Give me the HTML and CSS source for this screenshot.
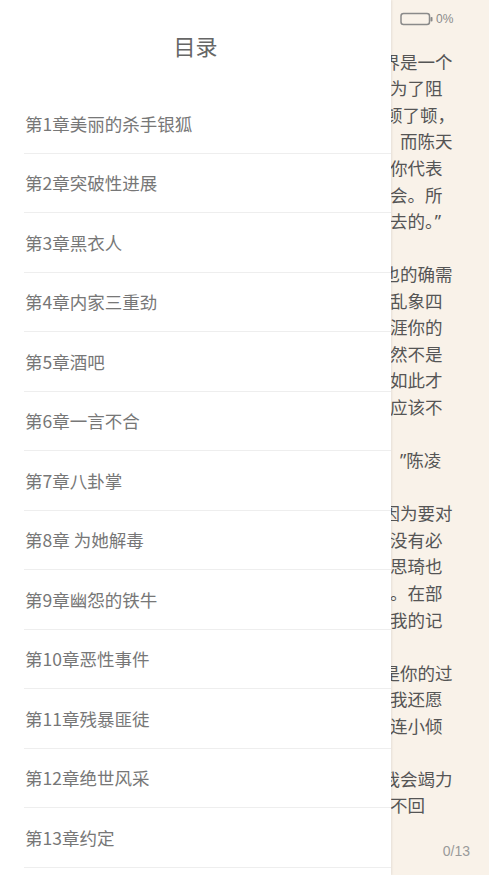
FILE: index.html
```html
<!DOCTYPE html>
<html lang="zh-CN">
<head>
<meta charset="utf-8">
<title>目录</title>
<link rel="stylesheet" href="styles.css">
</head>
<body>
<div class="screen">
  <main class="reader">
    <div class="status">
      <svg class="battery" width="34" height="14" viewBox="0 0 34 14">
        <rect x="1" y="1.5" width="28.5" height="11" rx="2.5" ry="2.5" fill="none" stroke="#8a8a8a" stroke-width="1.5"/>
        <rect x="30.5" y="5" width="2" height="4.5" rx="0.8" fill="#8a8a8a"/>
      </svg>
      <span class="pct">0%</span>
    </div>
    <div class="col">
      <div class="ln sa">界是一个</div>
      <div class="ln">为了阻</div>
      <div class="ln sb">顿了顿，</div>
      <div class="ln sa">，而陈天</div>
      <div class="ln">你代表</div>
      <div class="ln">会。所</div>
      <div class="ln">去的。<span class="q">”</span></div>
      <div class="ln"></div>
      <div class="ln sa">也的确需</div>
      <div class="ln">乱象四</div>
      <div class="ln">涯你的</div>
      <div class="ln">然不是</div>
      <div class="ln">如此才</div>
      <div class="ln">应该不</div>
      <div class="ln"></div>
      <div class="ln sc"><span class="q">”</span>陈凌</div>
      <div class="ln"></div>
      <div class="ln sa">因为要对</div>
      <div class="ln">没有必</div>
      <div class="ln">思琦也</div>
      <div class="ln">。在部</div>
      <div class="ln">我的记</div>
      <div class="ln"></div>
      <div class="ln sa">是你的过</div>
      <div class="ln">我还愿</div>
      <div class="ln">连小倾</div>
      <div class="ln"></div>
      <div class="ln sa">我会竭力</div>
      <div class="ln">不回</div>
    </div>
    <div class="pager">0/13</div>
  </main>

  <aside class="drawer">
    <h1 class="title">目录</h1>
    <ul class="toc">
      <li class="item">第1章美丽的杀手银狐</li>
      <li class="item">第2章突破性进展</li>
      <li class="item">第3章黑衣人</li>
      <li class="item">第4章内家三重劲</li>
      <li class="item">第5章酒吧</li>
      <li class="item">第6章一言不合</li>
      <li class="item">第7章八卦掌</li>
      <li class="item">第8章 为她解毒</li>
      <li class="item">第9章幽怨的铁牛</li>
      <li class="item">第10章恶性事件</li>
      <li class="item">第11章残暴匪徒</li>
      <li class="item">第12章绝世风采</li>
      <li class="item">第13章约定</li>
    </ul>
  </aside>
</div>
</body>
</html>
```

FILE: styles.css
```css
html, body {
  margin: 0;
  padding: 0;
}
body {
  width: 489px;
  height: 875px;
  overflow: hidden;
  background: #f9f2e9;
  font-family: "Noto Sans CJK SC", "Noto Sans", sans-serif;
}
.screen {
  position: relative;
  width: 489px;
  height: 875px;
  overflow: hidden;
}

/* reading page underneath */
.reader {
  display: flex;
  flex-direction: column;
  height: 875px;
  background: #f9f2e9;
}
.status {
  height: 36px;
  display: flex;
  align-items: center;
  padding-left: 400px;
  gap: 2px;
  color: #8a8a8a;
  box-sizing: border-box;
  padding-top: 1px;
}
.battery {
  display: block;
}
.pct {
  font-family: "Liberation Sans", "Noto Sans", sans-serif;
  font-size: 12px;
  line-height: 14px;
}
.col {
  margin-top: 12.7px;
  margin-left: 390px;
  color: #555;
  font-size: 17.5px;
  line-height: 26.57px;
}
.ln {
  height: 26.57px;
  white-space: nowrap;
}
.ln.sa { margin-left: -7.5px; }
.ln.sb { margin-left: -5px; }
.ln.sc { margin-left: 9px; }
.q {
  font-family: "Noto Sans", "DejaVu Sans", sans-serif;
  margin-left: 1px;
}
.pager {
  margin-top: auto;
  align-self: flex-end;
  margin-right: 19px;
  margin-bottom: 16px;
  font-family: "Liberation Sans", "Noto Sans", sans-serif;
  font-size: 14px;
  color: #9a9a9a;
}

/* table of contents drawer */
.drawer {
  position: absolute;
  top: 0;
  left: 0;
  width: 391px;
  height: 875px;
  background: #fff;
  box-shadow: 1px 0 2px rgba(0, 0, 0, 0.08);
}
.title {
  margin: 0;
  height: 94px;
  box-sizing: border-box;
  padding-bottom: 4px;
  display: flex;
  align-items: center;
  justify-content: center;
  font-size: 22px;
  font-weight: 400;
  color: #666;
}
.toc {
  list-style: none;
  margin: 0 0 0 24px;
  padding: 0;
}
.item {
  box-sizing: border-box;
  height: 59.5px;
  display: flex;
  align-items: center;
  padding-left: 1px;
  border-bottom: 1px solid #eeeeee;
  font-size: 17.5px;
  color: #777;
}
```
